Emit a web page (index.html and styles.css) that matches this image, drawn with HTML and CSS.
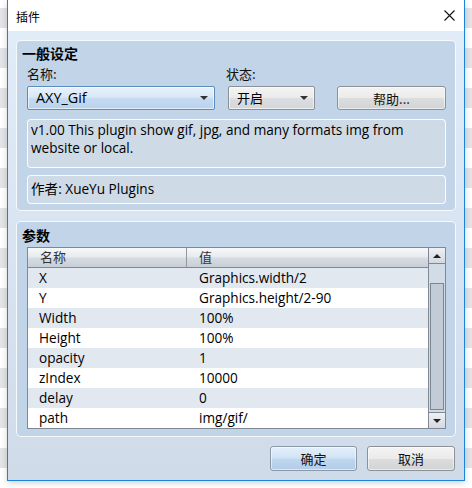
FILE: index.html
```html
<!DOCTYPE html>
<html lang="zh-CN">
<head>
<meta charset="utf-8">
<title>插件</title>
<link rel="stylesheet" href="styles.css">
</head>
<body>
<div class="dialog">
  <div class="titlebar">
    <span class="title">插件</span>
    <svg class="close" width="11" height="11" viewBox="0 0 11 11"><path d="M0.5 0.5L10.5 10.5M10.5 0.5L0.5 10.5" stroke="#111" stroke-width="1.1" fill="none"/></svg>
  </div>
  <div class="content">
    <section class="group g1">
      <div class="gtitle">一般设定</div>
      <div class="controls">
        <span class="lbl">名称:</span>
        <span class="lbl lbl2">状态:</span>
        <span></span>
        <div class="combo focus"><span>AXY_Gif</span><i class="arrow"></i></div>
        <div class="combo"><span>开启</span><i class="arrow"></i></div>
        <div class="btn help">帮助...</div>
      </div>
      <div class="box desc">v1.00 This plugin show gif, jpg, and many formats img from website or local.</div>
      <div class="box author">作者: XueYu Plugins</div>
    </section>
    <section class="group g2">
      <div class="gtitle">参数</div>
      <div class="grid">
        <div class="list">
          <div class="head"><span class="c1">名称</span><span class="c2">值</span></div>
          <div class="row"><span class="c1">X</span><span class="c2">Graphics.width/2</span></div>
          <div class="row"><span class="c1">Y</span><span class="c2">Graphics.height/2-90</span></div>
          <div class="row"><span class="c1">Width</span><span class="c2">100%</span></div>
          <div class="row"><span class="c1">Height</span><span class="c2">100%</span></div>
          <div class="row"><span class="c1">opacity</span><span class="c2">1</span></div>
          <div class="row"><span class="c1">zIndex</span><span class="c2">10000</span></div>
          <div class="row"><span class="c1">delay</span><span class="c2">0</span></div>
          <div class="row"><span class="c1">path</span><span class="c2">img/gif/</span></div>
        </div>
        <div class="scrollbar">
          <div class="sbtn up"><i class="tri-up"></i></div>
          <div class="track"><div class="thumb"></div></div>
          <div class="sbtn down"><i class="tri-down"></i></div>
        </div>
      </div>
    </section>
    <div class="footer">
      <div class="btn primary">确定</div>
      <div class="btn cancel">取消</div>
    </div>
  </div>
</div>
</body>
</html>
```
FILE: styles.css
```css
html, body {
  margin: 0;
  padding: 0;
}
body {
  width: 472px;
  height: 488px;
  overflow: hidden;
  font-family: "Open Sans", "Noto Sans CJK SC", sans-serif;
  font-size: 13.6px;
  color: #000;
  background: repeating-linear-gradient(to bottom, #ffffff 0 8px, #e2e4e7 8px 28px, #ffffff 28px 40px);
}
.dialog {
  margin-left: 7px;
  width: 458px;
  height: 481px;
  box-sizing: border-box;
  border: 1px solid #1c84d8;
  border-top: none;
  background: linear-gradient(to bottom, #e2edfa 0%, #d8e4f1 50%, #cfdbe8 100%);
  display: flex;
  flex-direction: column;
  box-shadow: 0 2px 6px rgba(0,0,0,0.18);
}
.titlebar {
  height: 31px;
  flex: none;
  background: #fff;
  display: flex;
  align-items: center;
  justify-content: space-between;
  padding: 0 9px 0 8px;
}
.title {
  font-family: "Noto Sans CJK SC", sans-serif;
  font-size: 12px;
  color: #000;
  margin-top: 1px;
}
.close {
  margin-top: -1px;
}
.content {
  padding: 9px 8px 0 8px;
  display: flex;
  flex-direction: column;
}
.group {
  border: 1px solid rgba(255,255,255,0.85);
  border-radius: 5px;
  background: #c1d4e8;
  padding: 0 9px 0 10px;
  display: flex;
  flex-direction: column;
}
.g1 {
  height: 171px;
  box-sizing: border-box;
}
.g2 {
  margin-top: 10px;
  height: 216px;
  box-sizing: border-box;
}
.gtitle {
  font-family: "Noto Sans CJK SC", sans-serif;
  font-weight: bold;
  font-size: 14px;
  line-height: 18px;
  height: 18px;
  margin-left: -5px;
  margin-top: 3px;
  color: #000;
}
.g2 .gtitle {
  margin-top: 4px;
}
.controls {
  display: grid;
  grid-template-columns: 188px 87px 1fr;
  grid-template-rows: 16px 24px;
  column-gap: 13px;
  row-gap: 4px;
  margin-top: 4px;
}
.lbl {
  font-family: "Noto Sans CJK SC", sans-serif;
  font-size: 13px;
  line-height: 16px;
  color: #111;
}
.lbl2 {
  margin-left: -2px;
}
.combo {
  box-sizing: border-box;
  height: 24px;
  border: 1px solid #8b9097;
  border-radius: 2px;
  background: linear-gradient(to bottom, #f4f4f4 0%, #eaeaea 50%, #dcdee1 51%, #d3d6da 100%);
  display: flex;
  align-items: center;
  justify-content: space-between;
  padding: 0 6px 0 8px;
  box-shadow: inset 0 0 0 1px rgba(255,255,255,0.6);
}
.combo span {
  font-family: "Noto Sans CJK SC", sans-serif;
  font-size: 13px;
  line-height: 16px;
}
.combo.focus {
  border-color: #5a8cc0;
  background: linear-gradient(to bottom, #e9f2fb 0%, #d9e8f7 45%, #c4daf1 55%, #b8d2ed 100%);
}
.combo.focus span {
  font-family: "Open Sans", sans-serif;
  font-size: 14.4px;
}
.arrow {
  width: 0;
  height: 0;
  border-left: 4px solid transparent;
  border-right: 4px solid transparent;
  border-top: 4px solid #333;
}
.btn {
  box-sizing: border-box;
  border: 1px solid #8d9196;
  border-radius: 3px;
  background: linear-gradient(to bottom, #f3f3f3 0%, #ebebeb 50%, #dddddd 51%, #d1d3d6 100%);
  box-shadow: inset 0 0 0 1px rgba(255,255,255,0.55);
  display: flex;
  align-items: center;
  justify-content: center;
  font-family: "Noto Sans CJK SC", sans-serif;
  font-size: 13px;
  color: #111;
}
.help {
  justify-self: end;
  width: 109px;
  height: 24px;
}
.box {
  box-sizing: border-box;
  border: 1px solid rgba(255,255,255,0.9);
  border-radius: 4px;
  background: #cedae6;
  padding: 1px 3px;
  line-height: 18px;
}
.desc {
  margin-top: 9px;
  height: 49px;
}
.author {
  margin-top: 7px;
  height: 29px;
  padding-top: 4px;
}
.grid {
  margin-top: 3px;
  height: 182px;
  box-sizing: border-box;
  border: 1px solid #7f8893;
  display: flex;
  background: #fff;
}
.list {
  flex: 1;
  display: flex;
  flex-direction: column;
}
.head {
  height: 20px;
  box-sizing: border-box;
  border-bottom: 1px solid #7f8893;
  background: linear-gradient(to bottom, #f7f8fa 0%, #e7ebef 45%, #d5dbe1 55%, #c8cfd7 100%);
  display: flex;
  font-family: "Noto Sans CJK SC", sans-serif;
  font-size: 13px;
  line-height: 18px;
  color: #333;
}
.head .c1 {
  flex: none;
  width: 159px;
  border-right: 1px solid #8e98a3;
  padding-left: 12px;
  box-sizing: border-box;
}
.head .c2 {
  padding-left: 12px;
}
.row {
  height: 20px;
  display: flex;
  line-height: 20px;
  background: #fff;
}
.row:nth-child(even) {
  background: #e1e8f0;
}
.row .c1 {
  width: 159px;
  flex: none;
  padding-left: 11px;
  box-sizing: border-box;
}
.row .c2 {
  padding-left: 12px;
}
.scrollbar {
  width: 16px;
  flex: none;
  border-left: 1px solid #7f8893;
  background: #d2dce7;
  display: flex;
  flex-direction: column;
}
.sbtn {
  height: 16px;
  box-sizing: border-box;
  background: linear-gradient(to bottom, #eef1f4, #d3d9df);
  display: flex;
  align-items: center;
  justify-content: center;
  flex: none;
}
.up {
  border-bottom: 1px solid #7f8893;
}
.down {
  border-top: 1px solid #7f8893;
}
.track {
  flex: 1;
  padding: 19px 1px 2px 1px;
  display: flex;
  flex-direction: column;
}
.thumb {
  flex: 1;
  border: 1px solid #7c8691;
  background: #c3ccd6;
}
.tri-up {
  border-left: 4px solid transparent;
  border-right: 4px solid transparent;
  border-bottom: 4px solid #222;
}
.tri-down {
  border-left: 4px solid transparent;
  border-right: 4px solid transparent;
  border-top: 4px solid #222;
}
.footer {
  display: flex;
  justify-content: flex-end;
  gap: 10px;
  margin-top: 9px;
  padding-right: 1px;
}
.footer .btn {
  height: 25px;
  width: 87px;
}
.footer .cancel {
  width: 88px;
}
.primary {
  background: linear-gradient(to bottom, #e4effa 0%, #d3e4f6 45%, #bfd6ee 55%, #b2cdea 100%);
  border-color: #8a98a8;
}
```
